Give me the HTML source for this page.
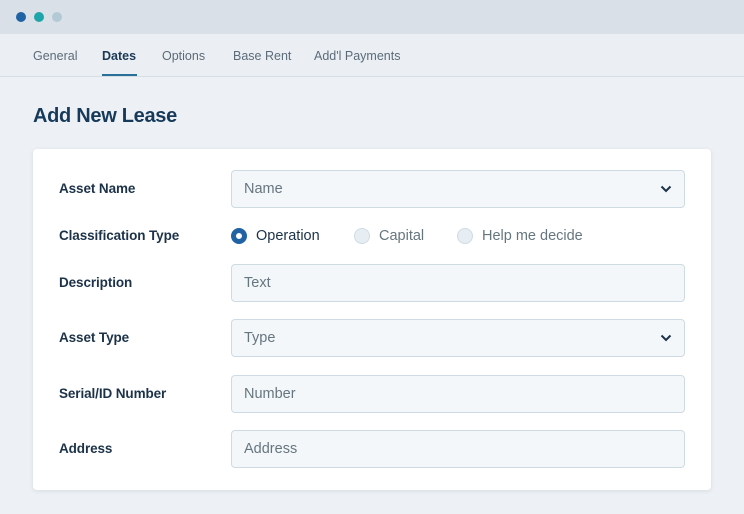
<!DOCTYPE html>
<html><head><style>
*{margin:0;padding:0;box-sizing:border-box}
body{width:744px;height:514px;background:#edf1f5;font-family:"Liberation Sans",sans-serif;position:relative;overflow:hidden}
.top{position:absolute;left:0;top:0;width:744px;height:34px;background:#d9e0e7}
.dot{position:absolute;top:12px;width:10px;height:10px;border-radius:50%}
.tabs{position:absolute;left:0;top:34px;width:744px;height:43px;background:#ebeff4;border-bottom:1px solid #d6dde4}
.tab{position:absolute;top:15px;font-size:12.5px;color:#5b6b78}
.tab.a{color:#1d3a55;font-weight:bold}
h1{position:absolute;left:33px;top:105px;font-size:20px;color:#173a5a;font-weight:bold;letter-spacing:-0.3px}
.card{position:absolute;left:33px;top:149px;width:678px;height:341px;background:#fff;border-radius:4px;box-shadow:0 1px 4px rgba(40,60,80,.12)}
.lbl{position:absolute;left:59px;font-size:13.5px;font-weight:bold;color:#1c3249;letter-spacing:-0.1px}
.in{position:absolute;left:231px;width:454px;height:38px;background:#f3f7fa;border:1px solid #cfdbe2;border-radius:4px;font-size:14.5px;color:#66767f;padding:10px 12px}
.in svg{position:absolute;right:12px;top:14px}
.r{position:absolute;top:228px;width:16px;height:16px;border-radius:50%;background:#e6edf3;border:1px solid #cfdbe2}
.rt{position:absolute;top:228px;font-size:14.5px;color:#66767f}
</style></head><body>
<div class="top"></div>
<div class="dot" style="left:16px;background:#1f63a4"></div>
<div class="dot" style="left:34px;background:#1ea5aa"></div>
<div class="dot" style="left:52px;background:#b3c9d6"></div>
<div class="tabs">
<span class="tab" style="left:33px">General</span>
<span class="tab a" style="left:102px">Dates</span>
<span class="tab" style="left:162px">Options</span>
<span class="tab" style="left:233px">Base Rent</span>
<span class="tab" style="left:314px">Add'l Payments</span>
<div style="position:absolute;left:102px;top:40px;width:35px;height:2px;background:#2a6f97"></div>
</div>
<h1>Add New Lease</h1>
<div class="card"></div>
<div class="lbl" style="top:181px">Asset Name</div>
<div class="in" style="top:170px">Name<svg width="12" height="8" viewBox="0 0 12 8"><path d="M1.5 1.5L6 6l4.5-4.5" fill="none" stroke="#1c3249" stroke-width="2"/></svg></div>
<div class="lbl" style="top:228px">Classification Type</div>
<div class="r" style="left:231px;background:#fff;border:5px solid #1f63a4"></div>
<span class="rt" style="left:256px;color:#1c3249">Operation</span>
<div class="r" style="left:354px"></div>
<span class="rt" style="left:379px">Capital</span>
<div class="r" style="left:457px"></div>
<span class="rt" style="left:482px">Help me decide</span>
<div class="lbl" style="top:275px">Description</div>
<div class="in" style="top:264px">Text</div>
<div class="lbl" style="top:330px">Asset Type</div>
<div class="in" style="top:319px">Type<svg width="12" height="8" viewBox="0 0 12 8"><path d="M1.5 1.5L6 6l4.5-4.5" fill="none" stroke="#1c3249" stroke-width="2"/></svg></div>
<div class="lbl" style="top:386px">Serial/ID Number</div>
<div class="in" style="top:375px">Number</div>
<div class="lbl" style="top:441px">Address</div>
<div class="in" style="top:430px">Address</div>
</body></html>
